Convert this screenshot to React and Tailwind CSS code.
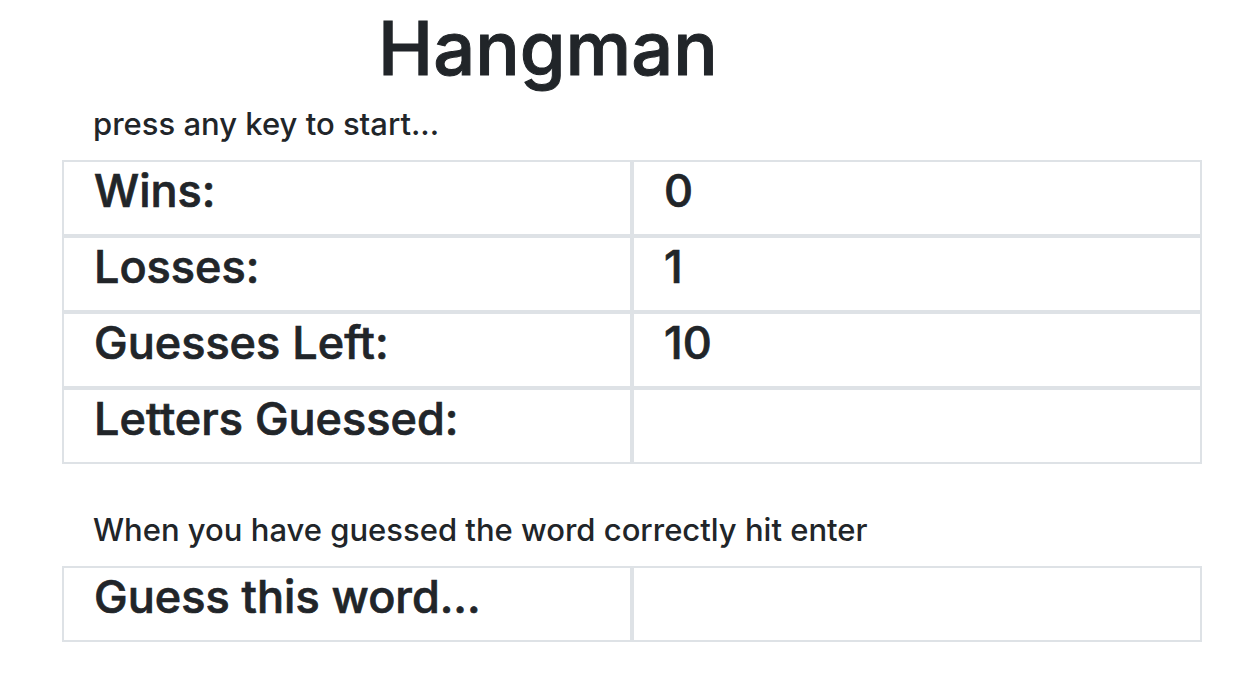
const stats = [
  ["Wins:", "0"],
  ["Losses:", "1"],
  ["Guesses Left:", "10"],
  ["Letters Guessed:", ""],
];

const Cell = ({ children }) => (
  <div className="h-[76px] border-2 border-[#dee2e6] pl-[30px] pt-[3px] text-[45px] leading-[52px] font-medium [-webkit-text-stroke:0.7px]">
    {children}
  </div>
);

const App = () => {
  return (
    <div
      className="w-[1242px] h-[680px] bg-white text-[#212529] overflow-hidden"
      style={{ fontFamily: "Inter, 'Liberation Sans', sans-serif" }}
    >
      {/* TITLE */}
      <div className="w-[1096px] text-center pt-[3px]">
        <h1 className="text-[74px] leading-[90px] font-medium [-webkit-text-stroke:1px]">Hangman</h1>
      </div>

      <p className="pl-[93px] mt-[11px] text-[31px] leading-[40px] font-medium">press any key to start...</p>

      {/* STATS TABLE */}
      <div className="ml-[62px] mt-[16px] w-[1140px] grid grid-cols-2">
        {stats.map(([label, value]) => (
          <div key={label} className="contents">
            <Cell>{label}</Cell>
            <Cell>{value}</Cell>
          </div>
        ))}
      </div>

      <p className="pl-[93px] mt-[46px] text-[31px] leading-[40px] font-medium">
        When you have guessed the word correctly hit enter
      </p>

      {/* WORD TABLE */}
      <div className="ml-[62px] mt-[16px] w-[1140px] grid grid-cols-2">
        <Cell>Guess this word...</Cell>
        <Cell></Cell>
      </div>
    </div>
  );
};

export default App;
